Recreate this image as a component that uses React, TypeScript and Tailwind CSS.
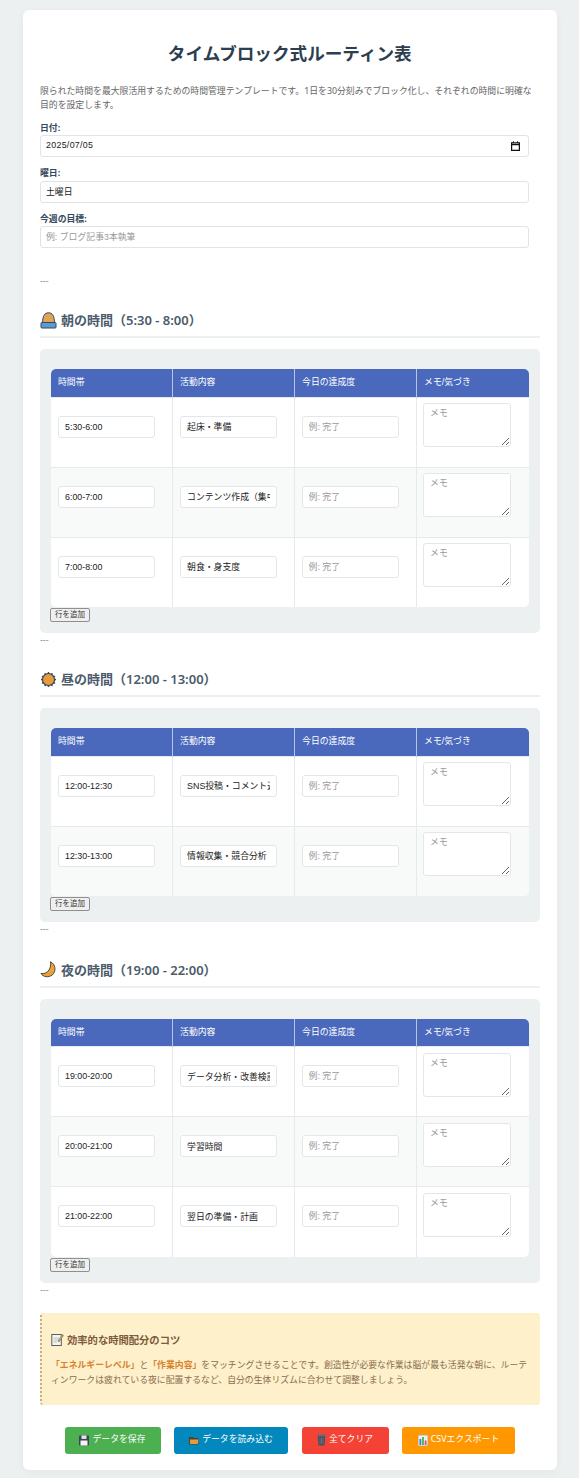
import React from "react";

const morning = ["5:30-6:00|起床・準備", "6:00-7:00|コンテンツ作成（集中タイム）", "7:00-8:00|朝食・身支度"];
const noon = ["12:00-12:30|SNS投稿・コメント返信", "12:30-13:00|情報収集・競合分析"];
const night = ["19:00-20:00|データ分析・改善検討", "20:00-21:00|学習時間", "21:00-22:00|翌日の準備・計画"];

const inputFont = { fontFamily: '"Liberation Sans", "Noto Sans CJK JP", sans-serif' };

const SunriseIcon = () => (
  <svg width="17" height="17" viewBox="0 0 17 17" className="shrink-0">
    <path d="M2.5 11.5 C2.5 4 4.5 0.8 8.5 0.8 C12.5 0.8 14.5 4 14.5 11.5 Z" fill="#e0a458" stroke="#34495e" strokeWidth="1" />
    <rect x="1" y="10.5" width="15" height="5.5" rx="0.8" fill="#5b9bd0" stroke="#34495e" strokeWidth="1" />
  </svg>
);

const SunIcon = () => (
  <svg width="17" height="17" viewBox="0 0 17 17" className="shrink-0">
    <polygon
      points="8.5,0.8 10.1,2.6 12.4,1.9 13,4.2 15.3,4.9 14.6,7.1 16.2,8.6 14.6,10.2 15.3,12.4 13,13 12.4,15.3 10.1,14.6 8.5,16.3 6.9,14.6 4.6,15.3 4,13 1.7,12.4 2.4,10.2 0.8,8.6 2.4,7.1 1.7,4.9 4,4.2 4.6,1.9 6.9,2.6"
      fill="#34495e"
    />
    <circle cx="8.5" cy="8.5" r="5.4" fill="#e89a3c" />
  </svg>
);

const MoonIcon = () => (
  <svg width="17" height="17" viewBox="0 0 17 17" className="shrink-0">
    <path d="M10.5 0.8 C15.5 3 16.5 10 12.5 13.8 C8.5 17 3 16 1 12.5 C4.5 13 7.5 11.5 9 9 C10.5 6.5 11 3.5 10.5 0.8 Z" fill="#e8a33d" stroke="#3b3a36" strokeWidth="0.9" />
  </svg>
);

const MemoIcon = () => (
  <svg width="13" height="13" viewBox="0 0 13 13" className="shrink-0">
    <rect x="0.8" y="1.5" width="9.5" height="11" fill="#f6f3ea" stroke="#55606e" strokeWidth="1" />
    <path d="M2.5 5H8M2.5 7H8M2.5 9H6" stroke="#a9b0b8" strokeWidth="0.7" />
    <path d="M7 8 L11.5 1.5 L12.6 2.4 L8 9 Z" fill="#e8a33d" stroke="#55606e" strokeWidth="0.5" />
  </svg>
);

const SaveIcon = () => (
  <svg width="10" height="11" viewBox="0 0 10 11" className="shrink-0">
    <rect x="0" y="0.5" width="10" height="10" rx="0.8" fill="#3d4456" />
    <rect x="2.5" y="0.5" width="5" height="3.4" fill="#e2e5ea" />
    <rect x="1.5" y="5.5" width="7" height="5" fill="#f4f4f4" />
  </svg>
);

const FolderIcon = () => (
  <svg width="10" height="9" viewBox="0 0 10 9" className="shrink-0">
    <path d="M0 1 H4 L5 2 H9.5 V8.5 H0 Z" fill="#4a4238" />
    <path d="M1 3.5 H9.5 L8.8 8 H1 Z" fill="#e99a3b" />
  </svg>
);

const TrashIcon = () => (
  <svg width="9" height="12" viewBox="0 0 9 12" className="shrink-0">
    <rect x="0.3" y="0.5" width="8.4" height="2.4" rx="0.8" fill="#5f6b78" />
    <path d="M0.8 2.5 H8.2 L7.5 11.5 H1.5 Z" fill="#46505c" />
    <path d="M3 4 V10M4.5 4 V10M6 4 V10" stroke="#76818e" strokeWidth="0.6" />
  </svg>
);

const ChartIcon = () => (
  <svg width="10" height="11" viewBox="0 0 10 11" className="shrink-0">
    <rect x="0" y="0" width="10" height="11" fill="#eef1f3" stroke="#7a8894" strokeWidth="0.6" />
    <rect x="1.5" y="4" width="1.8" height="6" fill="#3f7fb5" />
    <rect x="4.1" y="2" width="1.8" height="8" fill="#4caf50" />
    <rect x="6.7" y="5.5" width="1.8" height="4.5" fill="#d9534f" />
  </svg>
);

const CalendarIcon = () => (
  <svg width="9" height="10" viewBox="0 0 9 10" className="shrink-0">
    <path d="M0.6 1.8 H8.4 V9.4 H0.6 Z M0.6 3.6 H8.4" fill="none" stroke="#111" strokeWidth="1.2" />
    <path d="M2.4 0.3 V2M6.6 0.3 V2" stroke="#111" strokeWidth="1" />
  </svg>
);

const Dash = () => <p className="text-[8.86px] leading-[14px] text-[#7f8c8d]">---</p>;

const Field = ({ label, children }: { label: string; children: React.ReactNode }) => (
  <div className="mb-[10px]">
    <label className="block mb-[1.5px] text-[8.86px] leading-[12px] font-bold text-[#34495e]">{label}</label>
    {children}
  </div>
);

const Section = ({ icon, title, rows }: { icon: React.ReactNode; title: string; rows: string[] }) => (
  <section>
    <h2 className="flex items-center gap-[4px] pb-[6px] border-b-2 border-[#ecf0f1] text-[13px] leading-[20px] font-semibold text-[#4b5b6b]">
      {icon}
      {title}
    </h2>
    <div className="mt-[11px] px-[11px] pt-[20px] pb-[11px] bg-[#ecf0f1] rounded-[5px]">
      <table className="w-[478px] table-fixed border-collapse bg-white rounded-[5px] overflow-hidden" style={inputFont}>
        <colgroup>
          <col className="w-[121.6px]" />
          <col className="w-[122px]" />
          <col className="w-[122px]" />
          <col />
        </colgroup>
        <thead>
          <tr className="h-[28px] bg-[#4a69bd] text-white text-left text-[8.86px]">
            <th className="px-[7px] font-normal border-r border-[#b7c4e4]">時間帯</th>
            <th className="px-[7px] font-normal border-r border-[#b7c4e4]">活動内容</th>
            <th className="px-[7px] font-normal border-r border-[#b7c4e4]">今日の達成度</th>
            <th className="px-[7px] font-normal">メモ/気づき</th>
          </tr>
        </thead>
        <tbody>
          {rows.map((row, i) => {
            const [time, activity] = row.split("|");
            return (
              <tr key={time} className={i % 2 === 1 ? "h-[70px] bg-[#f8f9f9]" : "h-[70px]"}>
                <td className="align-top px-[7px] pt-[18px] border-r border-t border-[#e6eaec]">
                  <input defaultValue={time} className="block w-[97px] h-[22px] px-[6px] bg-white border border-[#e3e7ea] rounded-[3px] text-[8.86px] text-[#222]" />
                </td>
                <td className="align-top px-[7px] pt-[18px] border-r border-t border-[#e6eaec]">
                  <input defaultValue={activity} className="block w-[97px] h-[22px] px-[6px] bg-white border border-[#e3e7ea] rounded-[3px] text-[8.86px] text-[#222]" />
                </td>
                <td className="align-top px-[6.5px] pt-[18px] border-r border-t border-[#e6eaec]">
                  <input placeholder="例: 完了" className="block w-[97px] h-[22px] px-[6px] bg-white border border-[#e3e7ea] rounded-[3px] text-[8.86px] text-[#222] placeholder:text-[#9a9a9a]" />
                </td>
                <td className="align-top px-[6px] pt-[5.5px] border-t border-[#e6eaec]">
                  <textarea placeholder="メモ" className="block w-[87.5px] h-[44px] px-[6px] py-[3px] bg-white border border-[#e3e7ea] rounded-[3px] text-[8.86px] leading-[12px] placeholder:text-[#9a9a9a]" />
                </td>
              </tr>
            );
          })}
        </tbody>
      </table>
      <button className="block mt-px -ml-px h-[14px] w-[40px] bg-[#efefef] border border-[#8f8f8f] rounded-[2px] text-[7.5px] leading-[12px] text-[#333]" style={inputFont}>
        行を追加
      </button>
    </div>
  </section>
);

const ActionButton = ({ icon, label, className }: { icon: React.ReactNode; label: string; className: string }) => (
  <button className={"flex items-center justify-center gap-[3px] h-[27px] rounded-[3px] text-[8.86px] text-white " + className}>
    {icon}
    {label}
  </button>
);

export default function App() {
  return (
    <div className="min-h-[1478px] bg-[#ecf0f1] pt-[10px] pb-[8px] px-[23px]" style={{ fontFamily: '"Noto Sans", "Noto Sans CJK JP", sans-serif' }}>
      <main className="w-[533.5px] px-[17px] pt-[31px] pb-[16px] bg-white rounded-[6px] shadow-[0_2px_10px_rgba(0,0,0,0.04)]">
        <h1 className="text-center text-[17.6px] leading-[24px] font-bold text-[#2c3e50]">タイムブロック式ルーティン表</h1>
        <p className="mt-[19px] mb-[9.5px] text-[8.86px] leading-[14px] text-[#666]">
          限られた時間を最大限活用するための時間管理テンプレートです。1日を30分刻みでブロック化し、それぞれの時間に明確な目的を設定します。
        </p>

        <div className="w-[489px]">
          <Field label="日付:">
            <div className="flex items-center justify-between h-[22px] pl-[5px] pr-[8px] border border-[#e0e4e7] rounded-[3px] text-[8.86px] tracking-[0.3px] text-[#222]" style={inputFont}>
              2025/07/05
              <CalendarIcon />
            </div>
          </Field>
          <Field label="曜日:">
            <input defaultValue="土曜日" className="block w-full h-[22px] px-[5px] border border-[#e0e4e7] rounded-[3px] text-[8.86px] text-[#222]" style={inputFont} />
          </Field>
          <Field label="今週の目標:">
            <input placeholder="例: ブログ記事3本執筆" className="block w-full h-[22px] px-[5px] border border-[#e0e4e7] rounded-[3px] text-[8.86px] placeholder:text-[#9a9a9a]" style={inputFont} />
          </Field>
        </div>

        <div className="mt-[26px]">
          <Dash />
        </div>

        <div className="mt-[22px]">
          <Section icon={<SunriseIcon />} title="朝の時間（5:30 - 8:00）" rows={morning} />
        </div>
        <Dash />
        <div className="mt-[22px]">
          <Section icon={<SunIcon />} title="昼の時間（12:00 - 13:00）" rows={noon} />
        </div>
        <Dash />
        <div className="mt-[23.5px]">
          <Section icon={<MoonIcon />} title="夜の時間（19:00 - 22:00）" rows={night} />
        </div>
        <Dash />

        <aside className="mt-[16px] h-[92px] pl-[9px] pr-[9px] pt-[20px] bg-[#fdf0cb] border-l-2 border-dotted border-[#c9ad7c] rounded-[3px]">
          <h3 className="flex items-center gap-[3px] text-[10.3px] leading-[14px] font-bold text-[#7d5a3c]">
            <MemoIcon />
            効率的な時間配分のコツ
          </h3>
          <p className="mt-[11.5px] text-[8.86px] leading-[15px] text-[#8a6d4b]">
            <strong className="font-bold text-[#d9822b]">「エネルギーレベル」</strong>と<strong className="font-bold text-[#d9822b]">「作業内容」</strong>をマッチングさせることです。創造性が必要な作業は脳が最も活発な朝に、ルーティンワークは疲れている夜に配置するなど、自分の生体リズムに合わせて調整しましょう。
          </p>
        </aside>

        <div className="flex justify-center gap-[13.5px] mt-[22px]">
          <ActionButton icon={<SaveIcon />} label="データを保存" className="w-[96px] bg-[#4caf50]" />
          <ActionButton icon={<FolderIcon />} label="データを読み込む" className="w-[114px] bg-[#0288bd]" />
          <ActionButton icon={<TrashIcon />} label="全てクリア" className="w-[87px] bg-[#f44336]" />
          <ActionButton icon={<ChartIcon />} label="CSVエクスポート" className="w-[113px] bg-[#ff9800]" />
        </div>
      </main>
    </div>
  );
}
